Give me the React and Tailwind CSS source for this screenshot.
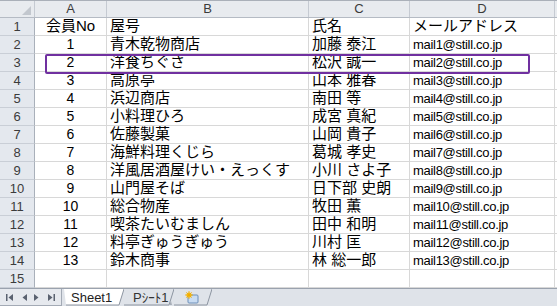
const rows = [
  ["会員No", "屋号", "氏名", "メールアドレス"],
  ["1", "青木乾物商店", "加藤 泰江", "mail1@still.co.jp"],
  ["2", "洋食ちぐさ", "松沢 誠一", "mail2@still.co.jp"],
  ["3", "高原亭", "山本 雅春", "mail3@still.co.jp"],
  ["4", "浜辺商店", "南田 等", "mail4@still.co.jp"],
  ["5", "小料理ひろ", "成宮 真紀", "mail5@still.co.jp"],
  ["6", "佐藤製菓", "山岡 貴子", "mail6@still.co.jp"],
  ["7", "海鮮料理くじら", "葛城 孝史", "mail7@still.co.jp"],
  ["8", "洋風居酒屋けい・えっくす", "小川 さよ子", "mail8@still.co.jp"],
  ["9", "山門屋そば", "日下部 史朗", "mail9@still.co.jp"],
  ["10", "総合物産", "牧田 薫", "mail10@still.co.jp"],
  ["11", "喫茶たいむましん", "田中 和明", "mail11@still.co.jp"],
  ["12", "料亭ぎゅうぎゅう", "川村 匡", "mail12@still.co.jp"],
  ["13", "鈴木商事", "林 総一郎", "mail13@still.co.jp"],
  ["", "", "", ""],
];

const font = { fontFamily: '"Liberation Sans", "Noto Sans CJK JP", sans-serif' };

function ColHead({ w, label }) {
  return (
    <div className={`${w} h-full flex items-center justify-center border-r border-[#c5cad2] text-[13px] text-[#3b3b3b]`}>
      {label}
    </div>
  );
}

function NavArrow({ dir, bar }) {
  return (
    <svg width="10" height="9" viewBox="0 0 10 9" className="text-[#5a6270]">
      {bar && dir === "l" && <rect x="1" y="1" width="1.5" height="7" fill="currentColor" />}
      {dir === "l" ? (
        <polygon points="8,1 8,8 3.5,4.5" fill="currentColor" />
      ) : (
        <polygon points="2,1 2,8 6.5,4.5" fill="currentColor" />
      )}
      {bar && dir === "r" && <rect x="7.5" y="1" width="1.5" height="7" fill="currentColor" />}
    </svg>
  );
}

export default function App() {
  return (
    <div className="relative w-[557px] h-[308px] bg-white overflow-hidden" style={font}>
      {/* column headers */}
      <div className="flex h-[18px] bg-[#e8ebef] border-t border-[#aab0b9] border-b border-b-[#b5bbc4]">
        <div className="w-[35px] h-full border-r border-[#c5cad2] flex items-end justify-end pr-[3px] pb-[2px]">
          <svg width="9" height="9" viewBox="0 0 9 9">
            <polygon points="9,0 9,9 0,9" fill="#c2c7ce" />
          </svg>
        </div>
        <ColHead w="w-[72px]" label="A" />
        <ColHead w="w-[202px]" label="B" />
        <ColHead w="w-[101px]" label="C" />
        <ColHead w="w-[145px]" label="D" />
        <div className="flex-1" />
      </div>

      {/* rows */}
      {rows.map((r, i) => (
        <div key={i} className="flex h-[18px]">
          <div className="w-[35px] h-full bg-[#e4e8ee] border-r border-r-[#a9b0ba] border-b border-[#c9ced6] flex items-center justify-center text-[13px] text-[#3b3b3b]">
            {i + 1}
          </div>
          <div className={`w-[72px] h-full border-r border-b border-[#d8d8d8] flex items-center justify-center text-black ${i === 0 ? "text-[15px]" : "text-[14px]"}`}>
            {r[0]}
          </div>
          <div className="w-[202px] h-full border-r border-b border-[#d8d8d8] flex items-center pl-[3px] text-[15px] text-black whitespace-nowrap">
            {r[1]}
          </div>
          <div className="w-[101px] h-full border-r border-b border-[#d8d8d8] flex items-center pl-[3px] text-[15px] text-black whitespace-nowrap">
            {r[2]}
          </div>
          <div className={`w-[145px] h-full border-r border-b border-[#d8d8d8] flex items-center pl-[3px] text-black whitespace-nowrap ${i === 0 ? "text-[15px]" : "text-[13px] tracking-[-0.3px]"}`}>
            {r[3]}
          </div>
          <div className="flex-1 h-full border-b border-[#d8d8d8]" />
        </div>
      ))}

      {/* sheet tab bar */}
      <div className="flex h-[18px] bg-[#dfe3e9] border-t border-[#9aa2ae] text-[13px]">
        <div className="w-[62px] h-full flex items-center justify-around px-[3px] bg-[#e6e9ee] border-r border-b border-[#a3aab5]">
          <NavArrow dir="l" bar />
          <NavArrow dir="l" />
          <NavArrow dir="r" />
          <NavArrow dir="r" bar />
        </div>
        <div className="relative w-[62px] h-full flex items-center pl-[9px] text-[#222]">
          <svg className="absolute inset-0" width="62" height="17" viewBox="0 0 62 17">
            <polygon points="2,0 62,0 57,16 4,16" fill="#ffffff" />
            <polyline points="62,0 57,16 4,16" fill="none" stroke="#8d95a1" strokeWidth="1" />
          </svg>
          <span className="relative whitespace-nowrap">Sheet1</span>
        </div>
        <div className="relative w-[50px] h-full flex items-center pl-[9px] text-[#333]">
          <svg className="absolute inset-0" width="50" height="17" viewBox="0 0 50 17">
            <polyline points="50,0 45,16 0,16" fill="none" stroke="#8d95a1" strokeWidth="1" />
            <polygon points="45,16 47,12 48,16" fill="#a7aeb8" />
          </svg>
          <span className="relative whitespace-nowrap">Pｼｰﾄ1</span>
        </div>
        <div className="relative w-[38px] h-full flex items-center pl-[11px]">
          <svg className="absolute inset-0" width="38" height="17" viewBox="0 0 38 17">
            <polyline points="38,0 33,16 0,16" fill="none" stroke="#8d95a1" strokeWidth="1" />
          </svg>
          <svg className="relative" width="14" height="13" viewBox="0 0 14 13">
            <rect x="3" y="4" width="10" height="8" rx="1" fill="#c9dcf2" stroke="#6d8fb8" strokeWidth="1" />
            <circle cx="4" cy="4" r="2.6" fill="#f7c21c" />
            <path d="M4 0 V8 M0 4 H8 M1.3 1.3 L6.7 6.7 M6.7 1.3 L1.3 6.7" stroke="#f0a800" strokeWidth="0.8" />
          </svg>
        </div>
        <div className="flex-1" />
      </div>

      {/* highlight box over row 3 */}
      <div className="absolute left-[45px] top-[54px] w-[485px] h-[20px] border-2 border-[#7030a0] rounded-[2px]" />
    </div>
  );
}
